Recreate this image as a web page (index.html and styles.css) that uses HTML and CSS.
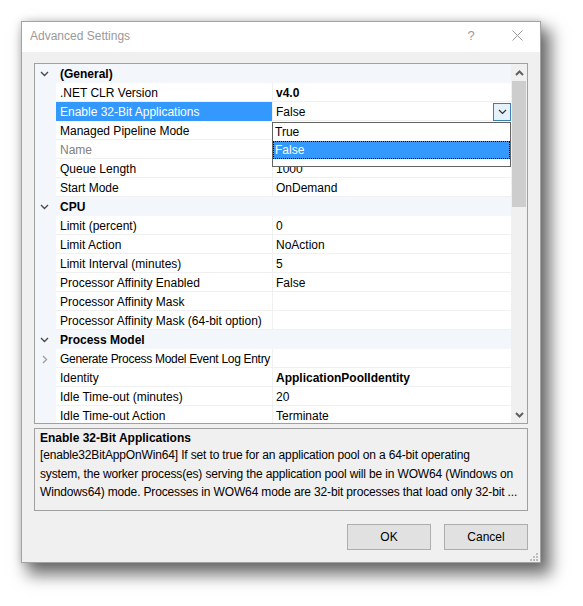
FILE: index.html
```html
<!DOCTYPE html>
<html lang="en">
<head>
<meta charset="utf-8">
<title>Advanced Settings</title>
<link rel="stylesheet" href="styles.css">
</head>
<body>
<div class="dialog">
  <div class="titlebar">
    <span class="title">Advanced Settings</span>
    <span class="cap-btn help">?</span>
    <span class="cap-btn close">
      <svg width="11" height="11" viewBox="0 0 11 11"><path d="M0.5 0.5 L10.5 10.5 M10.5 0.5 L0.5 10.5" stroke="#9a9a9a" stroke-width="1" fill="none"/></svg>
    </span>
  </div>

  <div class="body">
    <div class="grid">
      <div class="rows">
        <div class="row cat">
          <span class="gutter"><svg class="chev" width="9" height="6" viewBox="0 0 9 6"><path d="M1 1 L4.5 4.5 L8 1" stroke="#4a4a4a" stroke-width="1.4" fill="none"/></svg></span>
          <span class="cat-name">(General)</span>
        </div>
        <div class="row"><span class="gutter"></span><span class="name">.NET CLR Version</span><span class="value bold">v4.0</span></div>
        <div class="row selected"><span class="gutter"></span><span class="name">Enable 32-Bit Applications</span><span class="value">False
          <span class="drop-btn"><svg width="9" height="6" viewBox="0 0 9 6"><path d="M1 1 L4.5 4.5 L8 1" stroke="#333" stroke-width="1.2" fill="none"/></svg></span></span></div>
        <div class="row"><span class="gutter"></span><span class="name">Managed Pipeline Mode</span><span class="value"></span></div>
        <div class="row"><span class="gutter"></span><span class="name readonly">Name</span><span class="value"></span></div>
        <div class="row"><span class="gutter"></span><span class="name">Queue Length</span><span class="value">1000</span></div>
        <div class="row"><span class="gutter"></span><span class="name">Start Mode</span><span class="value">OnDemand</span></div>
        <div class="row cat">
          <span class="gutter"><svg class="chev" width="9" height="6" viewBox="0 0 9 6"><path d="M1 1 L4.5 4.5 L8 1" stroke="#4a4a4a" stroke-width="1.4" fill="none"/></svg></span>
          <span class="cat-name">CPU</span>
        </div>
        <div class="row"><span class="gutter"></span><span class="name">Limit (percent)</span><span class="value">0</span></div>
        <div class="row"><span class="gutter"></span><span class="name">Limit Action</span><span class="value">NoAction</span></div>
        <div class="row"><span class="gutter"></span><span class="name">Limit Interval (minutes)</span><span class="value">5</span></div>
        <div class="row"><span class="gutter"></span><span class="name">Processor Affinity Enabled</span><span class="value">False</span></div>
        <div class="row"><span class="gutter"></span><span class="name">Processor Affinity Mask</span><span class="value"></span></div>
        <div class="row"><span class="gutter"></span><span class="name">Processor Affinity Mask (64-bit option)</span><span class="value"></span></div>
        <div class="row cat">
          <span class="gutter"><svg class="chev" width="9" height="6" viewBox="0 0 9 6"><path d="M1 1 L4.5 4.5 L8 1" stroke="#4a4a4a" stroke-width="1.4" fill="none"/></svg></span>
          <span class="cat-name">Process Model</span>
        </div>
        <div class="row">
          <span class="gutter"><svg class="expand" width="6" height="9" viewBox="0 0 6 9"><path d="M1 1 L4.5 4.5 L1 8" stroke="#a0a0a0" stroke-width="1.4" fill="none"/></svg></span>
          <span class="name tight">Generate Process Model Event Log Entry</span><span class="value"></span>
        </div>
        <div class="row"><span class="gutter"></span><span class="name">Identity</span><span class="value bold">ApplicationPoolIdentity</span></div>
        <div class="row"><span class="gutter"></span><span class="name">Idle Time-out (minutes)</span><span class="value">20</span></div>
        <div class="row"><span class="gutter"></span><span class="name">Idle Time-out Action</span><span class="value">Terminate</span></div>
      </div>

      <div class="scrollbar">
        <div class="sb-btn"><svg width="9" height="6" viewBox="0 0 9 6"><path d="M1 5 L4.5 1.5 L8 5" stroke="#606060" stroke-width="2" fill="none"/></svg></div>
        <div class="sb-track"><div class="sb-thumb"></div></div>
        <div class="sb-btn"><svg width="9" height="6" viewBox="0 0 9 6"><path d="M1 1 L4.5 4.5 L8 1" stroke="#606060" stroke-width="2" fill="none"/></svg></div>
      </div>

      <div class="droplist">
        <div class="opt">True</div>
        <div class="opt active">False</div>
      </div>
    </div>

    <div class="desc">
      <div class="desc-title">Enable 32-Bit Applications</div>
      <div class="desc-line">[enable32BitAppOnWin64] If set to true for an application pool on a 64-bit operating</div>
      <div class="desc-line">system, the worker process(es) serving the application pool will be in WOW64 (Windows on</div>
      <div class="desc-line">Windows64) mode. Processes in WOW64 mode are 32-bit processes that load only 32-bit ...</div>
    </div>

    <div class="buttons">
      <button class="btn">OK</button>
      <button class="btn">Cancel</button>
    </div>
  </div>

  <svg class="grip" width="9" height="9" viewBox="0 0 9 9">
    <rect x="7" y="1" width="2" height="2" fill="#bdbdbd"/>
    <rect x="4" y="4" width="2" height="2" fill="#bdbdbd"/>
    <rect x="7" y="4" width="2" height="2" fill="#bdbdbd"/>
    <rect x="1" y="7" width="2" height="2" fill="#bdbdbd"/>
    <rect x="4" y="7" width="2" height="2" fill="#bdbdbd"/>
    <rect x="7" y="7" width="2" height="2" fill="#bdbdbd"/>
  </svg>
</div>
</body>
</html>
```

FILE: styles.css
```css
* {
  box-sizing: border-box;
}

html, body {
  margin: 0;
  padding: 0;
  background: #ffffff;
}

body {
  min-height: 606px;
  padding: 21px 0 0 21px;
  font-family: "Liberation Sans", Arial, sans-serif;
  font-size: 12px;
  color: #000;
}

/* window frame */
.dialog {
  position: relative;
  width: 520px;
  height: 542px;
  border: 1px solid #a3a3a3;
  background: #f0f0f0;
  display: flex;
  flex-direction: column;
  box-shadow: 0 0 8px rgba(0, 0, 0, 0.16), 8px 10px 15px 2px rgba(0, 0, 0, 0.55);
}

.titlebar {
  height: 30px;
  background: #ffffff;
  display: flex;
  align-items: center;
  padding: 0 0 3px 8px;
}

.title {
  flex: 1;
  color: #9a9a9a;
}

.cap-btn {
  width: 46px;
  height: 27px;
  display: flex;
  align-items: center;
  justify-content: center;
  color: #9a9a9a;
}

.help {
  font-size: 13px;
}

.body {
  flex: 1;
  display: flex;
  flex-direction: column;
  padding: 11px 12px 12px 12px;
}

/* property grid */
.grid {
  position: relative;
  height: 361px;
  border: 1px solid #a0a0a0;
  background: #ffffff;
  display: flex;
}

.rows {
  width: 476px;
  overflow: hidden;
  display: flex;
  flex-direction: column;
}

.row {
  flex: 0 0 19px;
  height: 19px;
  display: flex;
  line-height: 18px;
  white-space: nowrap;
}

.gutter {
  width: 21px;
  flex: 0 0 21px;
  background: #f3f6fb;
  display: flex;
  align-items: center;
  justify-content: center;
}

.name {
  width: 216px;
  flex: 0 0 216px;
  padding: 1px 0 0 4px;
  border-bottom: 1px solid #f0f0f0;
}

.name.tight {
  letter-spacing: -0.3px;
}

.name.readonly {
  color: #808080;
}

.value {
  flex: 1;
  position: relative;
  padding: 1px 0 0 3px;
  border-left: 1px solid #f0f0f0;
  border-bottom: 1px solid #f0f0f0;
}

.bold {
  font-weight: bold;
}

.row.cat {
  background: #f3f6fb;
}

.cat-name {
  padding: 1px 0 0 4px;
  font-weight: bold;
}

.chev {
  margin: 1px 0 0 -2px;
}

.expand {
  margin: 1px 0 0 -1px;
}

.row.selected .name {
  background: #3399ff;
  color: #ffffff;
  border-bottom-color: #3399ff;
}

.drop-btn {
  position: absolute;
  right: 0;
  top: 1px;
  width: 18px;
  height: 18px;
  border: 1px solid #3c7fb1;
  background: #e5f1fb;
  display: flex;
  align-items: center;
  justify-content: center;
}

/* open drop-down list */
.droplist {
  position: absolute;
  left: 237px;
  top: 58px;
  width: 239px;
  height: 45px;
  border: 1px solid #646464;
  background: #ffffff;
  z-index: 2;
}

.opt {
  height: 18px;
  line-height: 19px;
  padding-left: 2px;
}

.opt.active {
  background: #3399ff;
  color: #ffffff;
  outline: 1px dotted #000;
  outline-offset: -1px;
}

/* vertical scrollbar */
.scrollbar {
  width: 16px;
  background: #f0f0f0;
  display: flex;
  flex-direction: column;
}

.sb-btn {
  height: 17px;
  display: flex;
  align-items: center;
  justify-content: center;
}

.sb-track {
  flex: 1;
  display: flex;
  flex-direction: column;
}

.sb-thumb {
  height: 126px;
  margin: 0 1px;
  background: #cdcdcd;
}

/* description pane */
.desc {
  margin-top: 4px;
  height: 83px;
  border: 1px solid #a0a0a0;
  padding: 0 5px;
  white-space: nowrap;
}

.desc-title {
  font-weight: bold;
  line-height: 16px;
  margin-top: 1px;
}

.desc-line {
  line-height: 18.5px;
  letter-spacing: -0.15px;
}

.buttons {
  margin-top: 13px;
  display: flex;
  justify-content: flex-end;
  gap: 13px;
}

.btn {
  width: 84px;
  height: 26px;
  border: 1px solid #adadad;
  background: #e1e1e1;
  font-family: inherit;
  font-size: 12px;
  color: #000;
  padding: 0;
}

.grip {
  position: absolute;
  right: 2px;
  bottom: 1px;
}
```
